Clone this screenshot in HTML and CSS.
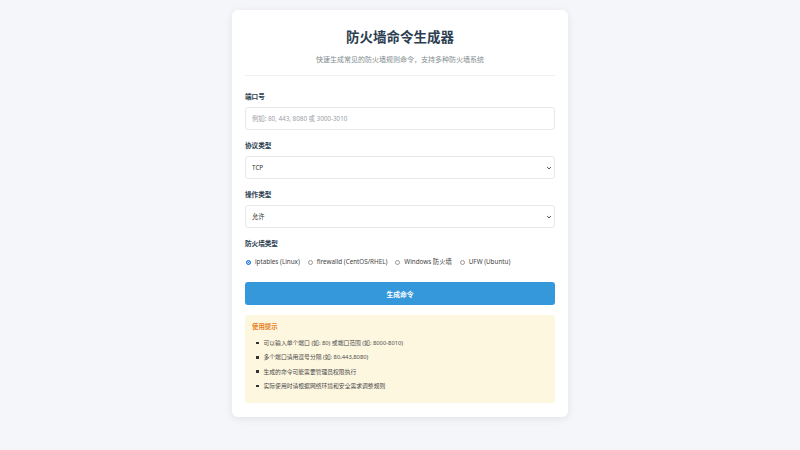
FILE: index.html
```html
<!DOCTYPE html>
<html lang="zh-CN">
<head>
<meta charset="utf-8">
<title>防火墙命令生成器</title>
<link rel="stylesheet" href="styles.css">
</head>
<body>
<div class="card">
  <header class="head">
    <h1 class="title">防火墙命令生成器</h1>
    <p class="subtitle">快速生成常见的防火墙规则命令，支持多种防火墙系统</p>
  </header>
  <form class="form">
    <div class="group">
      <label class="label">端口号</label>
      <input class="input" type="text" placeholder="例如: 80, 443, 8080 或 3000-3010">
    </div>
    <div class="group">
      <label class="label">协议类型</label>
      <div class="select-wrap">
        <select class="input select"><option>TCP</option></select>
        <svg class="chev" viewBox="0 0 10 10" width="6" height="6"><path d="M2 3.5 L5 6.5 L8 3.5" fill="none" stroke="#333" stroke-width="1.6"/></svg>
      </div>
    </div>
    <div class="group">
      <label class="label">操作类型</label>
      <div class="select-wrap">
        <select class="input select"><option>允许</option></select>
        <svg class="chev" viewBox="0 0 10 10" width="6" height="6"><path d="M2 3.5 L5 6.5 L8 3.5" fill="none" stroke="#333" stroke-width="1.6"/></svg>
      </div>
    </div>
    <div class="group">
      <label class="label">防火墙类型</label>
      <div class="radios">
        <label class="radio"><span class="dot on"></span>iptables (Linux)</label>
        <label class="radio"><span class="dot"></span>firewalld (CentOS/RHEL)</label>
        <label class="radio"><span class="dot"></span>Windows 防火墙</label>
        <label class="radio"><span class="dot"></span>UFW (Ubuntu)</label>
      </div>
    </div>
    <button class="btn" type="button">生成命令</button>
  </form>
  <div class="tips">
    <div class="tips-title">使用提示</div>
    <ul class="tips-list">
      <li>可以输入单个端口 (如: 80) 或端口范围 (如: 8000-8010)</li>
      <li>多个端口请用逗号分隔 (如: 80,443,8080)</li>
      <li>生成的命令可能需要管理员权限执行</li>
      <li>实际使用时请根据网络环境和安全需求调整规则</li>
    </ul>
  </div>
</div>
</body>
</html>
```
FILE: styles.css
```css
* { box-sizing: border-box; }
html, body { margin: 0; padding: 0; }
body {
  background: #f4f6f9;
  font-family: "Noto Sans", "Noto Sans CJK SC", sans-serif;
  color: #2c3e50;
  padding-top: 10px;
  height: 450px;
}
.card {
  width: 336px;
  margin: 0 auto;
  background: #fff;
  border-radius: 6px;
  box-shadow: 0 2px 8px rgba(0,0,0,0.08);
  padding: 13px 13px 14px;
}
.head {
  text-align: center;
  border-bottom: 1px solid #eef0f2;
  padding-bottom: 9px;
}
.title {
  margin: 0;
  font-size: 13.5px;
  line-height: 28px;
  font-weight: 700;
  color: #2c3e50;
}
.subtitle {
  margin: 3px 0 0;
  font-size: 7px;
  line-height: 12px;
  color: #7f8c8d;
}
.form { margin-top: 16px; display: flex; flex-direction: column; }
.group { display: flex; flex-direction: column; margin-bottom: 11px; }
.label {
  font-size: 6.6px;
  line-height: 10px;
  font-weight: 700;
  color: #2c3e50;
  margin-bottom: 5px;
}
.input {
  display: block;
  height: 23px;
  width: 100%;
  border: 1px solid #e6e8eb;
  border-radius: 3px;
  padding: 0 6px;
  font-family: "Noto Sans", "Noto Sans CJK SC", sans-serif;
  font-size: 6.3px;
  color: #333;
  background: #fff;
  outline: none;
  margin: 0;
}
.input::placeholder { color: #9aa0a6; }
.select-wrap { position: relative; display: block; }
.select { appearance: none; -webkit-appearance: none; }
.chev { position: absolute; right: 3px; top: 9px; }
.radios { display: flex; align-items: center; gap: 7px; margin-top: 3px; }
.radio {
  display: flex;
  align-items: center;
  font-size: 6.3px;
  line-height: 10px;
  color: #444;
}
.dot {
  width: 5px; height: 5px;
  border-radius: 50%;
  border: 0.7px solid #999;
  margin: 0 4px 0 1px;
  background: #fff;
}
.dot.on { border: 1.3px solid #1a73e8; background: #1a73e8; box-shadow: inset 0 0 0 0.7px #fff; }
.btn {
  margin-top: 4px;
  height: 23px;
  border: none;
  border-radius: 3px;
  background: #3498db;
  color: #fff;
  font-family: "Noto Sans", "Noto Sans CJK SC", sans-serif;
  font-size: 6.8px;
  font-weight: 700;
}
.tips {
  margin-top: 10px;
  background: #fef7e0;
  border-radius: 3px;
  padding: 7px 7px 10px;
}
.tips-title {
  font-size: 6.4px;
  line-height: 10px;
  font-weight: 700;
  color: #e67e22;
}
.tips-list {
  list-style: none;
  margin: 4px 0 0;
  padding: 0 0 0 4px;
}
.tips-list li {
  font-size: 5.8px;
  line-height: 14.3px;
  color: #4a4a4a;
  display: flex;
  align-items: center;
}
.tips-list li::before {
  content: "";
  width: 2.5px; height: 2.5px;
  background: #333;
  margin-right: 5px;
}
```
